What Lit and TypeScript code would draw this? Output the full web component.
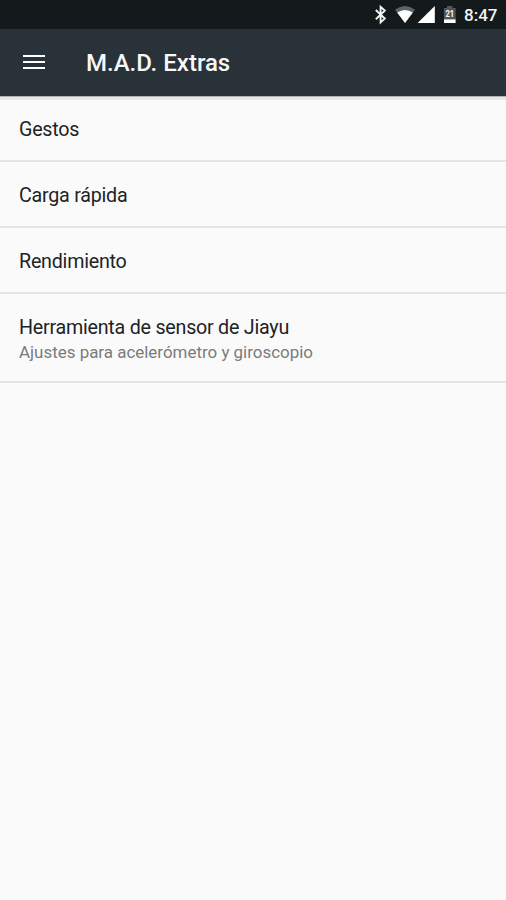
import { LitElement, html, css, svg } from "lit";
import { customElement } from "lit/decorators.js";

interface Entry { title: string; summary?: string }

const ENTRIES: Entry[] = [
  { title: "Gestos" },
  { title: "Carga rápida" },
  { title: "Rendimiento" },
  { title: "Herramienta de sensor de Jiayu", summary: "Ajustes para acelerómetro y giroscopio" },
];

@customElement("status-bar")
class StatusBar extends LitElement {
  static styles = css`
    :host { display: flex; gap: 4px; height: 29px; background: #14191c; justify-content: flex-end; align-items: center; padding-right: 10px; box-sizing: border-box; color: #f4f4f4; }
    svg { display: block; width: 90px; height: 29px; flex: none; }
    .digits { font: 700 9px Roboto, sans-serif; fill: #fff; }
    .clock { font: 500 17px/28px Roboto, sans-serif; width: 32px; white-space: nowrap; height: 28px; padding-top: 1px; }
  `;
  render() {
    return html`
      <svg viewBox="370 0 90 29">
        ${svg`
        <path d="M375.8 10 L384.8 18.6 L380.6 22.4 V6.8 L384.8 10.6 L375.8 19.2" fill="none" stroke="#f4f4f4" stroke-width="1.9"/>
        <path d="M405 23 L395 9.7 Q405 2.3 415 9.7Z" fill="#5c6366"/>
        <path d="M405 23 L397.2 12.4 Q405 7.4 412.8 12.4Z" fill="#fff"/>
        <path d="M434.8 6 V23 H417.6Z" fill="#fff"/>
        <path d="M444 8 H447 V6 H452.4 V8 H455.6 V19 H444Z" fill="#50585b"/>
        <path d="M444 19.3 H455.6 V23 H444Z" fill="#fff"/>
        <text class="digits" x="449.8" y="17.3" text-anchor="middle" textLength="8.6" lengthAdjust="spacingAndGlyphs">21</text>`}
      </svg>
      <div class="clock">8:47</div>`;
  }
}

@customElement("app-bar")
class AppBar extends LitElement {
  static styles = css`
    :host { display: flex; height: 67px; background: #283238; align-items: center; padding-left: 22.5px; gap: 41.5px; box-sizing: border-box; position: relative; box-shadow: 0 1px 0 #b0b3b4, 0 4px 0 #e6e6e6; }
    .menu { display: grid; gap: 4px; width: 22px; padding-bottom: 1px; }
    .menu i { height: 2px; background: #fff; }
    h1 { margin: 0; color: #f8f8f8; font: 500 24px/28px Roboto, sans-serif; white-space: nowrap; }
  `;
  render() {
    return html`<div class="menu"><i></i><i></i><i></i></div><h1>M.A.D. Extras</h1>`;
  }
}

@customElement("app-root")
class AppRoot extends LitElement {
  static styles = css`
    :host { display: block; min-height: 900px; background: #fafafa; font-family: Roboto, sans-serif; }
    .row { box-sizing: border-box; height: 66px; padding: 21px 19px 0; border-bottom: 2px solid #e4e4e4; }
    .row.tall { height: 89px; }
    .title { font-size: 19.7px; letter-spacing: -0.24px; line-height: 25px; color: #1d2326; white-space: nowrap; }
    .summary { font-size: 16.95px; line-height: 24px; color: #7b7b7b; white-space: nowrap; }
  `;
  render() {
    return html`
      <status-bar></status-bar>
      <app-bar></app-bar>
      <main>
        ${ENTRIES.map((e) => html`
          <div class="row ${e.summary ? "tall" : ""}">
            <div class="title">${e.title}</div>
            ${e.summary ? html`<div class="summary">${e.summary}</div>` : ""}
          </div>`)}
      </main>`;
  }
}
